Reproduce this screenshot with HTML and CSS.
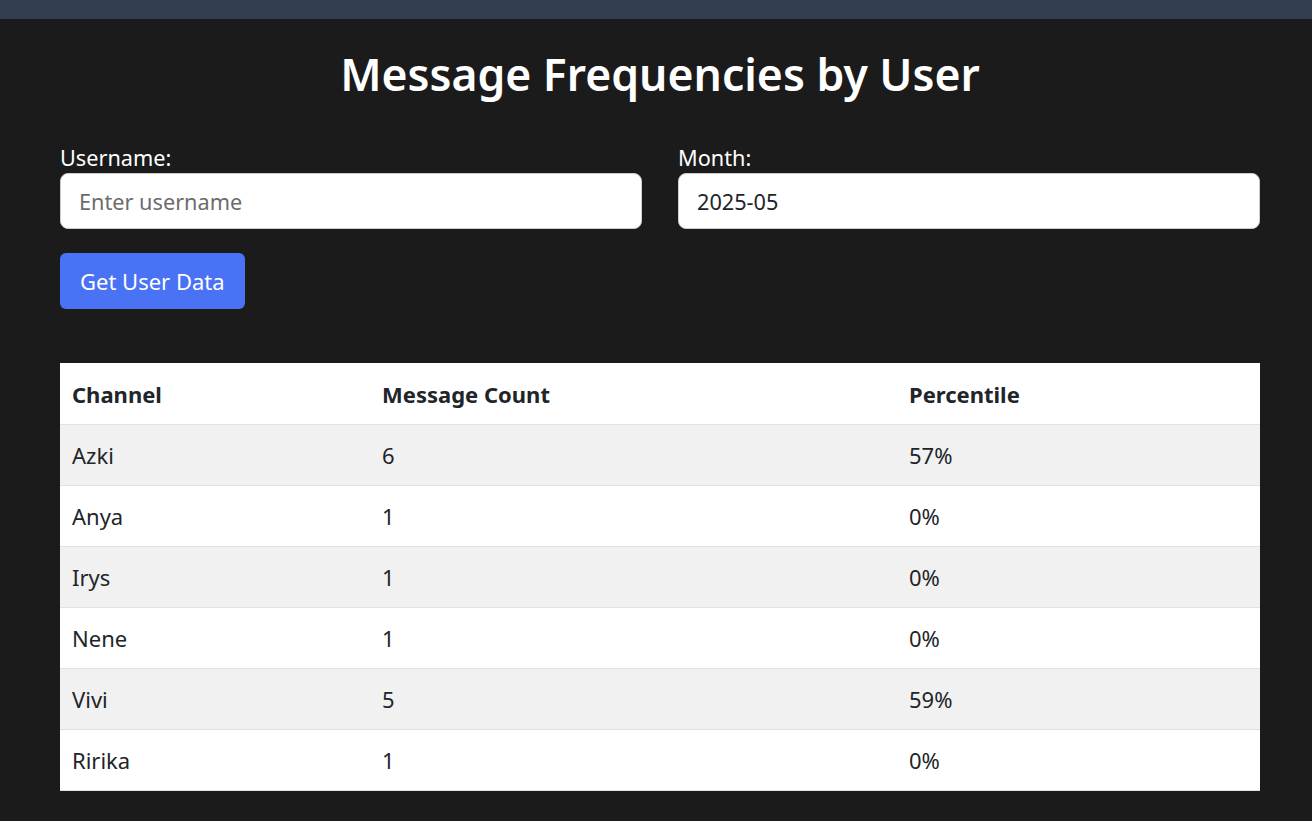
FILE: index.html
```html
<!DOCTYPE html>
<html lang="en">
<head>
    <meta charset="UTF-8">
    <meta name="viewport" content="width=device-width, initial-scale=1.0">
    <title>Message Frequencies by User</title>
    <link rel="stylesheet" href="styles.css">
</head>
<body>
    <div class="topbar"></div>
    <div class="container">
        <h1>Message Frequencies by User</h1>
        <div class="form-row">
            <div class="field">
                <label for="username">Username:</label>
                <input type="text" id="username" placeholder="Enter username">
            </div>
            <div class="field">
                <label for="month">Month:</label>
                <input type="text" id="month" value="2025-05">
            </div>
        </div>
        <button class="btn">Get User Data</button>
        <table class="results">
            <colgroup>
                <col class="col-channel">
                <col class="col-count">
                <col class="col-pct">
            </colgroup>
            <thead>
                <tr><th>Channel</th><th>Message Count</th><th>Percentile</th></tr>
            </thead>
            <tbody>
                <tr><td>Azki</td><td>6</td><td>57%</td></tr>
                <tr><td>Anya</td><td>1</td><td>0%</td></tr>
                <tr><td>Irys</td><td>1</td><td>0%</td></tr>
                <tr><td>Nene</td><td>1</td><td>0%</td></tr>
                <tr><td>Vivi</td><td>5</td><td>59%</td></tr>
                <tr><td>Ririka</td><td>1</td><td>0%</td></tr>
            </tbody>
        </table>
    </div>
</body>
</html>
```

FILE: styles.css
```css
:root {
    --bg: #1b1b1b;
    --bar: #323d4f;
    --primary: #4a72f5;
    --text-dark: #212529;
    --row-alt: #f1f1f1;
    --border: #dee2e6;
}
* {
    box-sizing: border-box;
    margin: 0;
    padding: 0;
}
body {
    font-family: 'Noto Sans', 'Open Sans', sans-serif;
    background: var(--bg);
    color: white;
    padding-left: 8px;
}
.topbar {
    height: 19px;
    margin-left: -8px;
    background: var(--bar);
}
.container {
    max-width: 1200px;
    margin: 0 auto;
}
h1 {
    text-align: center;
    font-size: 44.5px;
    font-weight: 600;
    line-height: 1.2;
    margin: 28px 0 44px;
}
.form-row {
    display: grid;
    grid-template-columns: 1fr 1fr;
    gap: 36px;
}
.field label {
    display: block;
    font-size: 21.7px;
    line-height: 28px;
}
.field input {
    width: 100%;
    height: 56px;
    margin-top: 1px;
    padding: 0 18px;
    border: 1px solid #ccc;
    border-radius: 8px;
    font-family: inherit;
    font-size: 21.7px;
    color: var(--text-dark);
    background: white;
}
.field input::placeholder {
    color: #6c6c6c;
}
.btn {
    margin-top: 24px;
    height: 56px;
    padding: 0 20px;
    border: none;
    border-radius: 6px;
    background: var(--primary);
    color: white;
    font-family: inherit;
    font-size: 22px;
}
.results {
    width: 100%;
    margin-top: 54px;
    border-collapse: collapse;
    background: white;
    color: var(--text-dark);
    font-size: 22px;
}
.col-channel { width: 310px; }
.col-count { width: 527px; }
.results th,
.results td {
    text-align: left;
    height: 61px;
    padding: 0 12px;
    border-bottom: 1px solid var(--border);
}
.results th {
    font-weight: 700;
}
.results tbody tr:nth-child(odd) {
    background: var(--row-alt);
}
```
